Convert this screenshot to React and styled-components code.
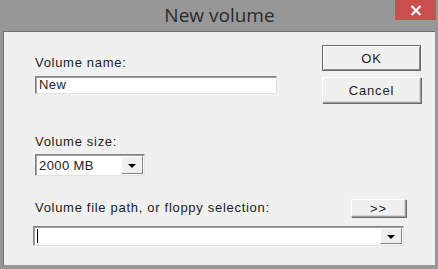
import React from 'react';
import styled, { createGlobalStyle } from 'styled-components';

const Global = createGlobalStyle`
  html, body {
    margin: 0;
    padding: 0;
    background: #979797;
  }
`;

export const Window = styled.div`
  width: 438px;
  height: 269px;
  background: #979797;
  display: flex;
  flex-flow: column nowrap;
  font-family: "Liberation Sans", Arial, sans-serif;
`;

export const TitleBar = styled.div`
  position: relative;
  height: 31px;
  display: flex;
  align-items: center;
  justify-content: center;
`;

export const Title = styled.div`
  font-family: "Open Sans", "Noto Sans", sans-serif;
  font-size: 19px;
  color: #2b2b2b;
  margin-top: -2px;
  margin-left: 1px;
`;

export const Close = styled.div`
  position: absolute;
  top: 0;
  right: 2px;
  width: 41px;
  height: 20px;
  background: #c94f4f;
  display: flex;
  align-items: center;
  justify-content: center;
`;

export const Client = styled.div`
  margin: 0 3px;
  height: 233px;
  background: #f0f0f0;
  border-top: 1px solid #6f6f6f;
  border-left: 1px solid #6f6f6f;
  padding: 0 14px 0 31px;
  display: flex;
  flex-flow: column nowrap;
  font-size: 13px;
  letter-spacing: 0.7px;
  color: #222;
`;

export const TopRow = styled.div`
  display: flex;
  justify-content: space-between;
  align-items: flex-start;
`;

export const Column = styled.div`
  display: flex;
  flex-flow: column nowrap;
  padding-top: ${p => p.top}px;
  gap: ${p => p.gap || 0}px;
`;

export const Label = styled.div`
  line-height: 14px;
  height: 14px;
  margin-bottom: ${p => p.below || 0}px;
  white-space: nowrap;
`;

const sunken = `
  box-sizing: border-box;
  background: #fff;
  border: 1px solid;
  border-color: #828282 #e3e3e3 #e3e3e3 #828282;
  box-shadow: inset 1px 1px 0 #a0a0a0;
`;

export const TextBox = styled.div`
  ${sunken}
  width: 242px;
  height: 18px;
  padding: 0 0 0 3px;
  line-height: 16px;
  letter-spacing: 0.4px;
`;

export const Button = styled.div`
  box-sizing: border-box;
  width: ${p => p.w}px;
  height: ${p => p.h}px;
  background: #f0f0f0;
  display: flex;
  align-items: center;
  justify-content: center;
  letter-spacing: 0.8px;
  border: 1px solid;
  border-color: ${p => (p.primary ? '#6a6a6a' : '#ffffff #a0a0a0 #a0a0a0 #ffffff')};
  box-shadow: ${p =>
    p.primary
      ? 'inset 1px 1px 0 #ffffff, inset -1px -1px 0 #8a8a8a'
      : 'inset -1px -1px 0 #d4d4d4, 1px 1px 0 #696969'};
`;

export const Combo = styled.div`
  ${sunken}
  width: ${p => p.w}px;
  height: ${p => p.h}px;
  display: flex;
  align-items: stretch;
  margin-left: ${p => p.shift || 0}px;
`;

export const ComboText = styled.div`
  flex: 1;
  padding-left: 3px;
  display: flex;
  align-items: center;
  letter-spacing: 0.4px;
`;

export const Caret = styled.div`
  width: 1px;
  height: 14px;
  background: #000;
`;

export const Drop = styled.div`
  width: 20px;
  margin: 1px 1px 1px 0;
  background: #f0f0f0;
  border-top: 1px solid #fff;
  border-left: 1px solid #fff;
  border-right: 1px solid #808080;
  border-bottom: 1px solid #808080;
  display: flex;
  align-items: center;
  justify-content: center;
`;

export const Arrow = styled.div`
  width: 0;
  height: 0;
  border-left: 4px solid transparent;
  border-right: 4px solid transparent;
  border-top: 4px solid #000;
  margin-top: 1px;
`;

export const Section = styled.div`
  display: flex;
  flex-flow: column nowrap;
  align-items: flex-start;
  margin-top: ${p => p.top}px;
`;

export const PathRow = styled.div`
  display: flex;
  justify-content: space-between;
  align-items: center;
  margin-top: ${p => p.top}px;
  padding-right: 15px;
`;

const DropButton = () => (
  <Drop>
    <Arrow />
  </Drop>
);

export default function App() {
  return (
    <Window>
      <Global />
      <TitleBar>
        <Title>New volume</Title>
        <Close>
          <svg width="12" height="11" viewBox="0 0 12 11">
            <path d="M1.5 1 L10.5 10 M10.5 1 L1.5 10" stroke="#fff" strokeWidth="2.2" />
          </svg>
        </Close>
      </TitleBar>
      <Client>
        <TopRow>
          <Column top={24}>
            <Label below={6}>Volume name:</Label>
            <TextBox>New</TextBox>
          </Column>
          <Column top={13} gap={6}>
            <Button primary w={99} h={26}>OK</Button>
            <Button w={99} h={26}>Cancel</Button>
          </Column>
        </TopRow>
        <Section top={32}>
          <Label below={5}>Volume size:</Label>
          <Combo w={110} h={22}>
            <ComboText>2000 MB</ComboText>
            <DropButton />
          </Combo>
        </Section>
        <PathRow top={23}>
          <Label>Volume file path, or floppy selection:</Label>
          <Button w={55} h={18}>&gt;&gt;</Button>
        </PathRow>
        <Section top={9}>
          <Combo w={371} h={20} shift={-2}>
            <ComboText>
              <Caret />
            </ComboText>
            <DropButton />
          </Combo>
        </Section>
      </Client>
    </Window>
  );
}
